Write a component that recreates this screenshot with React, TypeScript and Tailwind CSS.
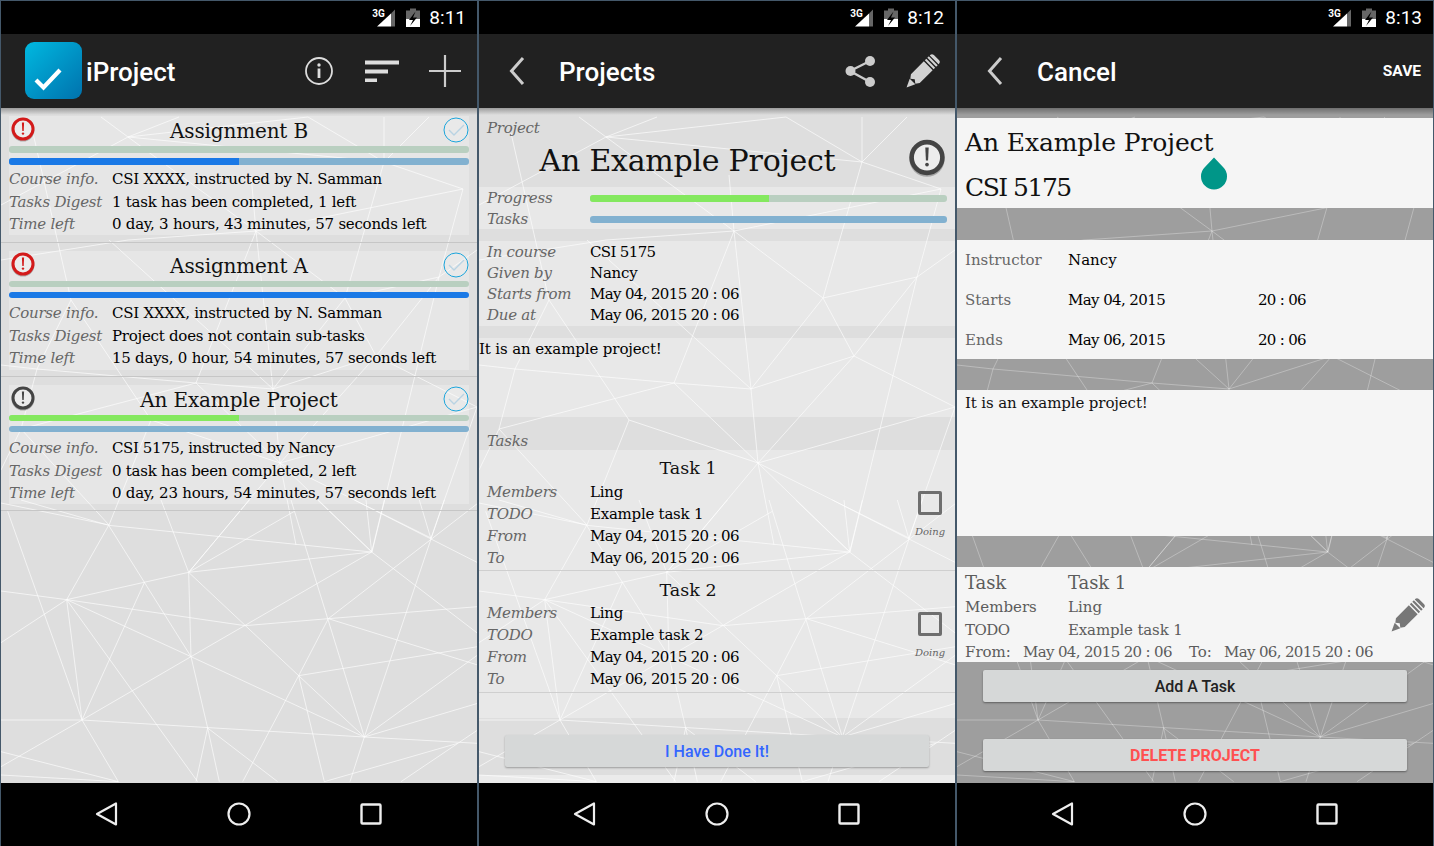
import type { ReactNode } from 'react';

const LOW: number[][] = [
  [20, 34, 243, 660], [60, 0, 323, 76], [323, 76, 1112, 156], [323, 76, 197, 299], [323, 76, 570, 470],
  [480, 0, 563, 217], [745, 0, 563, 217], [880, 34, 563, 217], [563, 217, 1112, 156], [563, 217, 197, 299],
  [563, 217, 570, 470], [563, 217, 893, 527], [0, 273, 197, 299], [197, 299, 732, 377], [732, 377, 982, 356],
  [982, 356, 1430, 320], [197, 299, 0, 428], [197, 299, 243, 660], [197, 299, 570, 470], [197, 299, 590, 845],
  [430, 248, 243, 660], [570, 470, 243, 660], [570, 470, 1112, 156], [570, 470, 1090, 711], [570, 470, 620, 684],
  [243, 660, 0, 800], [243, 660, 352, 845], [243, 660, 1090, 711], [1090, 711, 1430, 730], [0, 660, 243, 660],
  [0, 755, 352, 845], [0, 825, 352, 845], [620, 684, 585, 845], [620, 684, 655, 845], [620, 684, 830, 845],
  [893, 527, 725, 845], [893, 527, 970, 845], [893, 527, 1090, 711], [893, 527, 1430, 440], [982, 356, 893, 527],
  [870, 0, 1090, 711], [982, 356, 1430, 10], [982, 356, 1430, 495], [1112, 156, 1430, 400], [1112, 156, 950, 0],
  [1112, 156, 1095, 0], [1112, 156, 1150, 0], [1290, 117, 1060, 0], [1290, 117, 1430, 188], [1290, 117, 1090, 711],
  [1090, 711, 1047, 845], [1090, 711, 1430, 465], [1090, 711, 1430, 610], [970, 845, 1370, 730], [1200, 845, 1430, 690],
  [1290, 117, 1255, 0], [1290, 117, 1330, 0],
];

const HIGH: number[][] = [
  [0, 205, 127, 137], [127, 137, 255, 231], [127, 137, 383, 162], [100, 117, 127, 137], [127, 137, 178, 117],
  [127, 137, 307, 117], [307, 117, 383, 162], [383, 117, 383, 162], [383, 162, 428, 117], [383, 162, 462, 189],
  [383, 162, 344, 298], [462, 189, 255, 231], [462, 189, 438, 277], [255, 231, 344, 298], [255, 231, 272, 389],
  [255, 231, 195, 383], [255, 231, 250, 175], [344, 298, 438, 277], [344, 298, 375, 356], [344, 298, 272, 389],
  [438, 277, 476, 250], [438, 277, 375, 356], [438, 277, 371, 552], [375, 356, 476, 407], [375, 356, 279, 463],
  [272, 389, 279, 463], [272, 389, 195, 383], [272, 389, 375, 356], [195, 383, 36, 369], [36, 369, 0, 365],
  [36, 369, 20, 429], [195, 383, 279, 463], [195, 383, 20, 429], [108, 240, 272, 389], [20, 429, 0, 470],
  [20, 429, 108, 525], [279, 463, 371, 552], [279, 463, 430, 538], [279, 463, 295, 545], [279, 463, 476, 407],
  [279, 463, 188, 572], [32, 133, 70, 300], [70, 300, 36, 369], [0, 503, 108, 525], [0, 260, 127, 240],
  [127, 240, 255, 231], [476, 407, 430, 538], [70, 300, 150, 420], [150, 420, 108, 525], [150, 420, 279, 463],
];

function Backdrop({ dim }: { dim?: boolean }) {
  return (
    <svg className="absolute inset-0 h-full w-full" viewBox="0 108 476 675">
      <g stroke="#fff" strokeWidth="0.75" strokeOpacity={dim ? 0.4 : 0.85}>
        {HIGH.map((l, i) => (
          <line key={i} x1={l[0]} y1={l[1]} x2={l[2]} y2={l[3]} />
        ))}
        {LOW.map((l, i) => (
          <line key={i} x1={l[0] / 3} y1={500 + l[1] / 3} x2={l[2] / 3} y2={500 + l[3] / 3} />
        ))}
      </g>
    </svg>
  );
}

function StatusBar({ time }: { time: string }) {
  return (
    <div className="flex h-[33px] items-center justify-end gap-[9px] bg-black pr-[11px]">
      <div className="relative h-[20px] w-[48px]">
        <span className="absolute left-0 top-0 font-['Roboto',sans-serif] text-[10px] font-bold leading-[12px] text-white">3G</span>
        <svg className="absolute inset-0" width="48" height="20" viewBox="0 0 48 20">
          <polygon points="5,18.5 19,18.5 19,5.5" fill="#fff" />
          <polygon points="19,18.5 23,18.5 23,1.5 19,5.5" fill="#666" />
          <path d="M38 0.5h6v2h4v8.5H34V2.5h4z" fill="#666" />
          <path d="M34 11h14v8H34z" fill="#fff" />
          <path d="M43.5 3.5 37 12h4l-3 6 7-8.5h-4z" fill="#000" />
        </svg>
      </div>
      <span className="font-['Roboto',sans-serif] text-[19px] leading-none text-white">{time}</span>
    </div>
  );
}

function NavBar() {
  return (
    <div className="flex h-[63px] items-center justify-center gap-[106px] bg-black pb-[1px]">
      <svg width="26" height="26" viewBox="0 0 26 26">
        <path d="M22 2.5v21L3 13z" fill="none" stroke="#eee" strokeWidth="2.2" strokeLinejoin="round" />
      </svg>
      <svg width="26" height="26" viewBox="0 0 26 26">
        <circle cx="13" cy="13" r="10.5" fill="none" stroke="#eee" strokeWidth="2.2" />
      </svg>
      <svg width="26" height="26" viewBox="0 0 26 26">
        <rect x="3.5" y="3.5" width="19" height="19" rx="1" fill="none" stroke="#eee" strokeWidth="2.4" />
      </svg>
    </div>
  );
}

function Chevron() {
  return (
    <svg width="16" height="30" viewBox="0 0 16 30" className="ml-[30px] shrink-0">
      <path d="M14 2 2.5 15 14 28" fill="none" stroke="#ccc" strokeWidth="3" />
    </svg>
  );
}

function Pencil({ color, size }: { color: string; size: number }) {
  return (
    <svg width={size} height={size} viewBox="0 0 36 36" className="shrink-0 overflow-visible">
      <g transform="rotate(45 18 18)" fill={color}>
        <polygon points="18,41 13.5,31.5 22.5,31.5" />
        <polygon points="11,27 14,31 18,28 22,31 25,27 25,6.5 11,6.5" />
        <rect x="11" y="2.5" width="14" height="2.4" />
        <rect x="11" y="-1.5" width="14" height="2.4" />
        <path d="M11-3v-.5a3 3 0 0 1 3-3h8a3 3 0 0 1 3 3v.5z" />
      </g>
    </svg>
  );
}

function Alert({ big, color }: { big?: boolean; color: string }) {
  const s = big ? 38 : 24;
  return (
    <svg width={s} height={s + 2} viewBox="0 0 24 26" className="shrink-0">
      <circle cx="12" cy="13.2" r="11.4" fill="#000" fillOpacity="0.25" />
      <circle cx="12" cy="12" r="10" fill="#ececec" stroke={color} strokeWidth="3" />
      <path d="M10.9 5.5h2.2l-.4 8.5h-1.4z" fill={color} />
      <circle cx="12" cy="16.6" r="1.2" fill={color} />
    </svg>
  );
}

function DoneCircle() {
  return (
    <svg width="26" height="26" viewBox="0 0 26 26" className="shrink-0">
      <circle cx="13" cy="13" r="12" fill="#fff" fillOpacity="0.15" stroke="#1ba5dc" strokeWidth="1" />
      <path d="m6 13 5 5L21 8" fill="none" stroke="#b9d3e3" strokeWidth="1.4" />
    </svg>
  );
}

function Bar({ fill, color, track, h = 'h-[6px]' }: { fill: number; color: string; track: string; h?: string }) {
  return (
    <div className={`overflow-hidden rounded-[3px] ${h} ${track}`}>
      <div className={`h-full ${color}`} style={{ width: `${fill}%` }} />
    </div>
  );
}

// DejaVu runs wider than the serif in the shot, digits most of all
function valueTrack(value: string) {
  if (value.startsWith('May') || value === 'CSI 5175') return 'tracking-[-0.65px]';
  if (value.startsWith('CSI 5175,')) return 'tracking-[-0.4px]';
  return 'tracking-[-0.25px]';
}

function Row({ label, value, h = 'h-[22px]' }: { label: string; value: string; h?: string }) {
  return (
    <div className={`flex items-center text-[15px] ${h}`}>
      <span className="w-[103px] shrink-0 italic tracking-[-0.25px] text-[#666]">{label}</span>
      <span className={`whitespace-nowrap text-black ${valueTrack(value)}`}>{value}</span>
    </div>
  );
}

function ProjectCard(props: {
  title: string;
  alert: string;
  topFill: number;
  topColor: string;
  midFill: number;
  barH: string;
  course: string;
  digest: string;
  left: string;
  pb: string;
  mt: string;
}) {
  return (
    <div className={`border-b border-[#c6c6c6] px-[8px] pt-[8px] ${props.pb}`}>
      <div className="h-[119px] bg-white/25">
        <div className="flex h-[30px] items-center justify-between">
          <div className="ml-[2px] -mt-[2px]"><Alert color={props.alert} /></div>
          <span className="text-[20px] tracking-[-0.15px] text-[#111]">{props.title}</span>
          <div className="-mt-[3px]"><DoneCircle /></div>
        </div>
        <div className="flex flex-col gap-[5px]">
          <Bar fill={props.topFill} color={props.topColor} track="bg-[#b9cfc0]" h={props.barH} />
          <Bar fill={props.midFill} color="bg-[#1a79e6]" track="bg-[#82b1d0]" h={props.barH} />
        </div>
        <div className={props.mt}>
          <Row h="h-[22.5px]" label="Course info." value={props.course} />
          <Row h="h-[22.5px]" label="Tasks Digest" value={props.digest} />
          <Row h="h-[22.5px]" label="Time left" value={props.left} />
        </div>
      </div>
    </div>
  );
}

function ListScreen() {
  return (
    <Phone
      time="8:11"
      bar={
        <>
          <div className="ml-[24px] -mt-[1px] flex h-[57px] w-[57px] shrink-0 items-center justify-center rounded-[9px] bg-linear-to-br from-[#00b9e0] to-[#0172ad]">
            <svg width="57" height="57" viewBox="0 0 57 57">
              <path d="m11 38 7.5 7.5L35 28" fill="none" stroke="#fff" strokeWidth="4.2" />
            </svg>
          </div>
          <span className="ml-[4px] pt-[3px] text-[26px] font-medium text-white">iProject</span>
          <div className="ml-auto flex items-center gap-[30px] pr-[16px]">
            <svg width="30" height="30" viewBox="0 0 30 30">
              <circle cx="15" cy="15" r="13" fill="none" stroke="#ddd" strokeWidth="1.8" />
              <circle cx="15" cy="9" r="1.7" fill="#ddd" />
              <rect x="13.6" y="12.5" width="2.8" height="9.5" fill="#ddd" />
            </svg>
            <svg width="35" height="24" viewBox="0 0 35 24">
              <rect x="1" y="1.5" width="34" height="4" fill="#ddd" />
              <rect x="1" y="10.5" width="23" height="4" fill="#ddd" />
              <rect x="1" y="19.5" width="12" height="3.5" fill="#ddd" />
            </svg>
            <svg width="32" height="32" viewBox="0 0 32 32">
              <path d="M16 0v32M0 16h32" stroke="#ccc" strokeWidth="2.2" />
            </svg>
          </div>
        </>
      }
    >
      <div className="relative">
        <ProjectCard pb="pb-[7px]" mt="mt-[3px]" title="Assignment B" alert="#d31a1a" topFill={0} topColor="bg-[#84e85f]" midFill={50} barH="h-[7px]" course="CSI XXXX, instructed by N. Samman" digest="1 task has been completed, 1 left" left="0 day, 3 hours, 43 minutes, 57 seconds left" />
        <ProjectCard pb="pb-[6px]" mt="mt-[4px]" title="Assignment A" alert="#d31a1a" topFill={0} topColor="bg-[#84e85f]" midFill={100} barH="h-[6px]" course="CSI XXXX, instructed by N. Samman" digest="Project does not contain sub-tasks" left="15 days, 0 hour, 54 minutes, 57 seconds left" />
        <ProjectCard pb="pb-[6px]" mt="mt-[5px]" title="An Example Project" alert="#444" topFill={50} topColor="bg-[#84e85f]" midFill={0} barH="h-[6px]" course="CSI 5175, instructed by Nancy" digest="0 task has been completed, 2 left" left="0 day, 23 hours, 54 minutes, 57 seconds left" />
      </div>
    </Phone>
  );
}

function TaskBlock({ name, todo, head, rows, pb }: { name: string; todo: string; head: string; rows: string; pb: string }) {
  return (
    <div className={`border-b border-[#cfcfcf] px-[8px] ${pb}`}>
      <div className={`flex items-end justify-center pr-[58px] pb-[1px] text-[17.5px] text-[#111] ${head}`}>{name}</div>
      <div className={`relative ${rows}`}>
        <Row label="Members" value="Ling" />
        <Row label="TODO" value={todo} />
        <Row label="From" value="May 04, 2015 20 : 06" />
        <Row label="To" value="May 06, 2015 20 : 06" />
        <div className="absolute right-[2px] top-[10px] flex w-[30px] flex-col items-center">
          <div className="h-[24px] w-[24px] rounded-[2px] border-[3px] border-[#6e6e6e]" />
          <span className="mt-[9px] text-[10px] italic text-[#666]">Doing</span>
        </div>
      </div>
    </div>
  );
}

function DetailScreen() {
  return (
    <Phone
      time="8:12"
      bar={
        <>
          <Chevron />
          <span className="ml-[34px] pt-[3px] text-[26px] font-medium text-white">Projects</span>
          <div className="ml-auto flex items-center gap-[28px] pr-[18px]">
            <svg width="32" height="32" viewBox="0 0 32 32">
              <path d="M25 6 5 16l20 11" fill="none" stroke="#ccc" strokeWidth="2.4" />
              <circle cx="25" cy="6" r="5" fill="#ccc" />
              <circle cx="5.5" cy="16" r="5" fill="#ccc" />
              <circle cx="25" cy="27" r="5" fill="#ccc" />
            </svg>
            <div className="mt-[4px]"><Pencil color="#d2d2d2" size={32} /></div>
          </div>
        </>
      }
    >
      <div className="relative flex h-full flex-col">
        <div className="h-[8px]" />
        <div className="h-[71px] px-[8px]">
          <div className="flex h-[22px] items-center pt-[3px] text-[15px] italic tracking-[-0.25px] text-[#666]">Project</div>
          <div className="flex items-center">
            <span className="flex-1 pr-[20px] pt-[4px] text-center text-[30px] leading-[38px] tracking-[-0.25px] text-[#111]">An Example Project</span>
            <div className="-mt-[1px] mr-[1px]"><Alert big color="#444" /></div>
          </div>
        </div>
        <div className="h-[42px] bg-white/30 px-[8px] pt-[1px]">
          <div className="flex h-[21px] items-center text-[15px] italic tracking-[-0.25px] text-[#666]">
            <span className="w-[103px] shrink-0">Progress</span>
            <div className="-mt-[1px] flex-1"><Bar fill={50} color="bg-[#84e85f]" track="bg-[#b9cfc0]" h="h-[7px]" /></div>
          </div>
          <div className="flex h-[21px] items-center text-[15px] italic tracking-[-0.25px] text-[#666]">
            <span className="w-[103px] shrink-0">Tasks</span>
            <div className="-mt-[1px] flex-1"><Bar fill={0} color="bg-[#1a79e6]" track="bg-[#82b1d0]" h="h-[7px]" /></div>
          </div>
        </div>
        <div className="h-[12px]" />
        <div className="h-[85px] bg-white/30 px-[8px] pt-[1px]">
          <Row h="h-[21px]" label="In course" value="CSI 5175" />
          <Row h="h-[21px]" label="Given by" value="Nancy" />
          <Row h="h-[21px]" label="Starts from" value="May 04, 2015 20 : 06" />
          <Row h="h-[21px]" label="Due at" value="May 06, 2015 20 : 06" />
        </div>
        <div className="h-[12px]" />
        <div className="h-[79px] bg-white/30 text-[15px] tracking-[-0.12px] text-black">It is an example project!</div>
        <div className="flex h-[33px] items-end px-[8px] text-[15px] italic leading-[18px] tracking-[-0.25px] text-[#666]">Tasks</div>
        <div className="h-[268px] bg-white/30">
          <TaskBlock name="Task 1" todo="Example task 1" head="h-[32px]" rows="-mt-[1px]" pb="pb-[1px]" />
          <TaskBlock name="Task 2" todo="Example task 2" head="h-[33px]" rows="-mt-[2px]" pb="pb-[2px]" />
        </div>
        <div className="flex h-[57px] items-start justify-center pt-[17px]">
          <button className="h-[32px] w-[424px] rounded-[2px] bg-[#d6d8d8] pt-[1px] font-['Roboto',sans-serif] text-[16px] font-medium text-[#3366ff] shadow-[0_1px_2px_rgba(0,0,0,0.3)]">I Have Done It!</button>
        </div>
        <div className="flex-1 bg-white/40" />
      </div>
    </Phone>
  );
}

function EditRow({ label, value, time }: { label: string; value: string; time?: string }) {
  return (
    <div className="flex h-[40px] items-center text-[15px]">
      <span className="w-[103px] shrink-0 text-[#666]">{label}</span>
      <span className={`w-[190px] shrink-0 text-black ${time ? 'tracking-[-0.6px]' : ''}`}>{value}</span>
      <span className="tracking-[-0.7px] text-black">{time}</span>
    </div>
  );
}

function EditScreen() {
  return (
    <Phone
      time="8:13"
      dim
      bar={
        <>
          <Chevron />
          <span className="ml-[34px] pt-[3px] text-[26px] font-medium text-white">Cancel</span>
          <span className="ml-auto pr-[12px] pt-[1px] text-[15.5px] font-bold text-white">SAVE</span>
        </>
      }
    >
      <div className="relative flex h-full flex-col">
        <div className="h-[10px]" />
        <div className="relative h-[90px] bg-[#f5f5f5] px-[8px] pt-[1px] text-[#111]">
          <div className="flex h-[48px] items-center text-[25px] tracking-[-0.1px]">An Example Project</div>
          <div className="flex h-[41px] items-center text-[25px] tracking-[-1.5px]">CSI 5175</div>
          <svg className="absolute left-[243px] top-[39px]" width="28" height="33" viewBox="0 0 28 33">
            <path d="M14 0.5 23 10a13 13 0 1 1-18 0z" fill="#009688" />
          </svg>
        </div>
        <div className="h-[32px]" />
        <div className="h-[119px] bg-[#f5f5f5] px-[8px]">
          <EditRow label="Instructor" value="Nancy" />
          <EditRow label="Starts" value="May 04, 2015" time="20 : 06" />
          <EditRow label="Ends" value="May 06, 2015" time="20 : 06" />
        </div>
        <div className="h-[31px]" />
        <div className="h-[146px] bg-[#f5f5f5] px-[8px] pt-[2px] text-[15px] tracking-[-0.12px] text-[#111]">It is an example project!</div>
        <div className="h-[31px]" />
        <div className="relative h-[95px] bg-[#f5f5f5] px-[8px] pt-[1px] text-[#5c5c5c]">
          <div className="flex h-[28px] items-center text-[18px] tracking-[-0.1px]">
            <span className="w-[103px]">Task</span>
            <span>Task 1</span>
          </div>
          <div className="flex h-[23px] items-center text-[15px]">
            <span className="w-[103px]">Members</span>
            <span>Ling</span>
          </div>
          <div className="flex h-[23px] items-center text-[15px]">
            <span className="w-[103px] tracking-[-0.5px]">TODO</span>
            <span className="tracking-[-0.15px]">Example task 1</span>
          </div>
          <div className="flex h-[21px] items-center whitespace-nowrap text-[15px]">
            <span className="w-[58px]">From:</span>
            <span className="w-[166px] tracking-[-0.65px]">May 04, 2015 20 : 06</span>
            <span className="w-[35px]">To:</span>
            <span className="tracking-[-0.65px]">May 06, 2015 20 : 06</span>
          </div>
          <div className="absolute right-[11px] top-[34px]"><Pencil color="#777" size={32} /></div>
        </div>
        <div className="flex flex-1 flex-col items-center gap-[37px] pt-[8px]">
          <button className="h-[32px] w-[424px] rounded-[2px] bg-[#d6d8d8] pt-[1px] font-['Roboto',sans-serif] text-[16px] font-medium text-[#222] shadow-[0_1px_2px_rgba(0,0,0,0.4)]">Add A Task</button>
          <button className="h-[32px] w-[424px] rounded-[2px] bg-[#d6d8d8] pt-[1px] font-['Roboto',sans-serif] text-[16px] font-bold text-[#ff5050] shadow-[0_1px_2px_rgba(0,0,0,0.4)]">DELETE PROJECT</button>
        </div>
      </div>
    </Phone>
  );
}

function Phone({ time, bar, children, dim }: { time: string; bar: ReactNode; children: ReactNode; dim?: boolean }) {
  return (
    <div className="flex h-full w-[476px] flex-col">
      <StatusBar time={time} />
      <div className="flex h-[74px] items-center bg-[#212121] font-['Roboto',sans-serif]">{bar}</div>
      <div className={`relative flex-1 overflow-hidden ${dim ? 'bg-[#9e9e9e]' : 'bg-[#dedede]'}`}>
        <Backdrop dim={dim} />
        {children}
        <div className="absolute inset-x-0 top-0 h-[7px] bg-linear-to-b from-black/30 to-transparent" />
      </div>
      <NavBar />
    </div>
  );
}

export default function App() {
  return (
    <div className="flex h-[846px] w-[1434px] gap-[2px] overflow-hidden bg-[#44586a] px-[1px] pt-[1px] font-['DejaVu_Serif',serif]">
      <ListScreen />
      <DetailScreen />
      <EditScreen />
    </div>
  );
}
